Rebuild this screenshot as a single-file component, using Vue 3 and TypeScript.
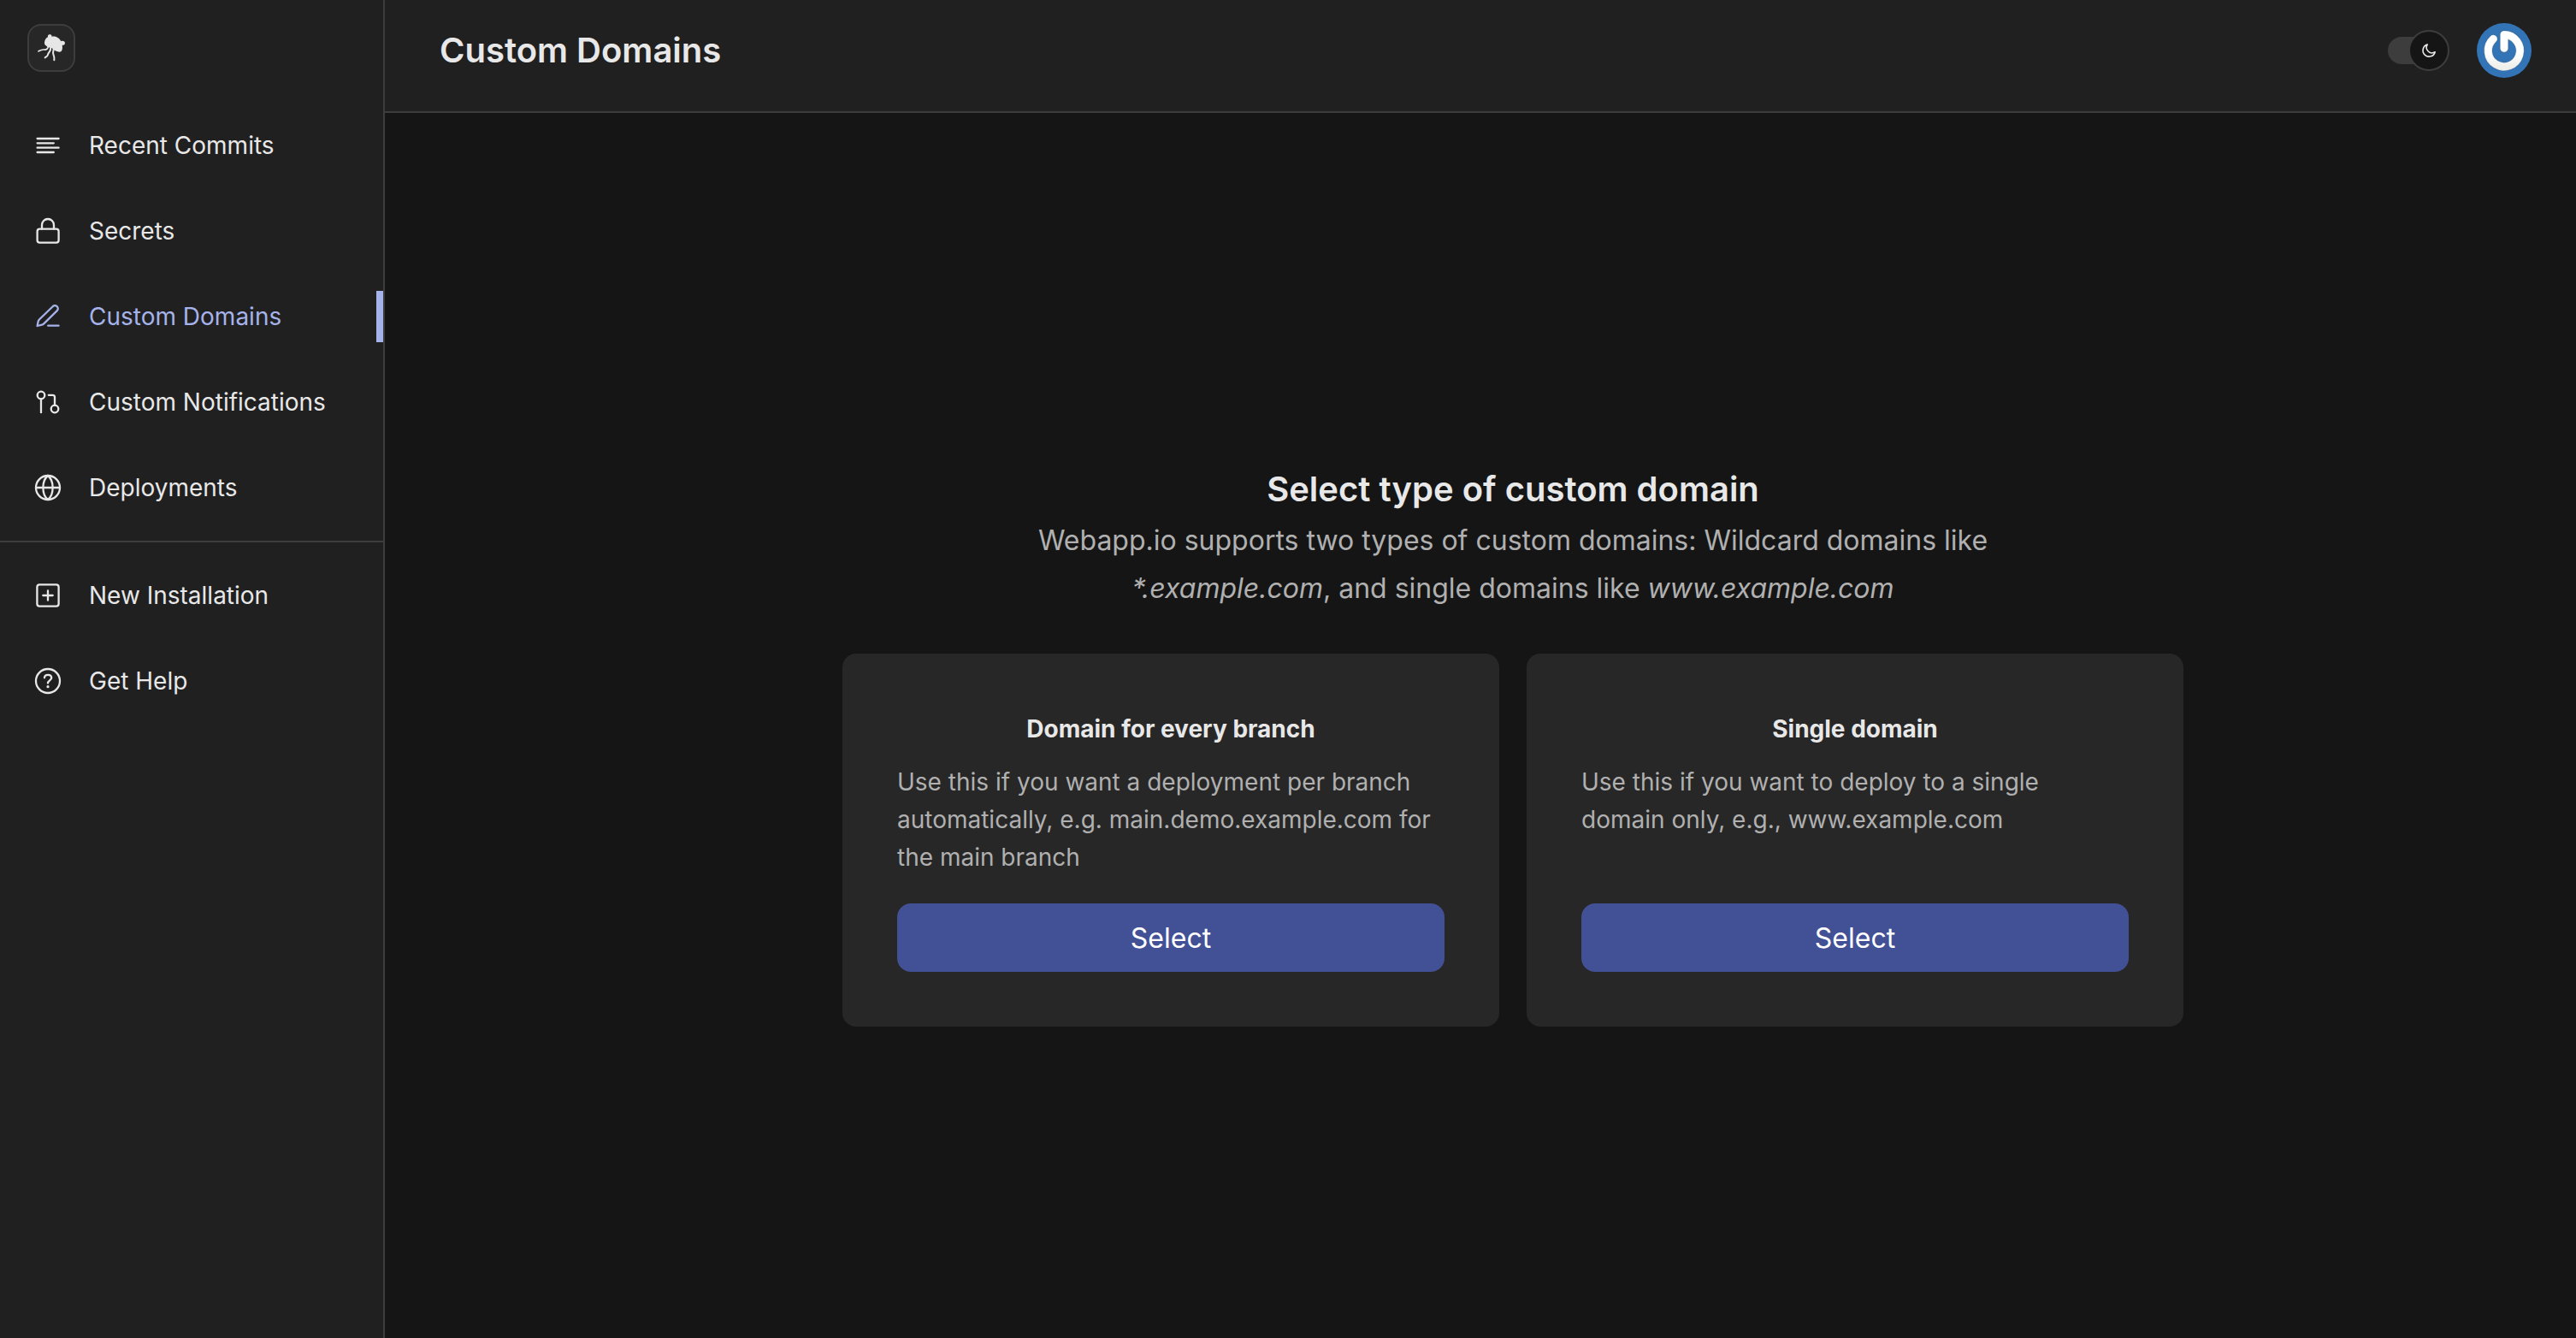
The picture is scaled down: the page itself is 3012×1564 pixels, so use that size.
<script setup lang="ts">
import { ref } from 'vue'

interface NavItem {
  id: string
  label: string
}

interface DomainOption {
  id: string
  title: string
  description: string
}

const projectNav: NavItem[] = [
  { id: 'commits', label: 'Recent Commits' },
  { id: 'secrets', label: 'Secrets' },
  { id: 'domains', label: 'Custom Domains' },
  { id: 'notifications', label: 'Custom Notifications' },
  { id: 'deployments', label: 'Deployments' },
]

const generalNav: NavItem[] = [
  { id: 'install', label: 'New Installation' },
  { id: 'help', label: 'Get Help' },
]

const groups: NavItem[][] = [projectNav, generalNav]

const options: DomainOption[] = [
  {
    id: 'wildcard',
    title: 'Domain for every branch',
    description:
      'Use this if you want a deployment per branch automatically, e.g. main.demo.example.com for the main branch',
  },
  {
    id: 'single',
    title: 'Single domain',
    description: 'Use this if you want to deploy to a single domain only, e.g., www.example.com',
  },
]

const active = ref('domains')
const darkMode = ref(true)
const selected = ref<string | null>(null)
</script>

<template>
  <div class="app">
    <aside class="sidebar">
      <a class="logo" href="#" aria-label="Home">
        <svg viewBox="42 42 156 156" aria-hidden="true">
          <g fill="none" stroke="#e6e6e6" stroke-linecap="round" stroke-width="6">
            <path d="M110 114C108 124 102 127 94 126S82 128 75 132" stroke-width="5" />
            <path d="M118 118C119 132 110 135 108 143S102 151 98 154" />
            <path d="M128 124C124 137 127 144 129 149S130 159 130 163" />
          </g>
          <path
            fill="#e6e6e6"
            d="M108 82C106 75 112 71 117 73C121 74 122 78 121 80C133 78 148 83 154 97C158 94 167 96 168 102C168 109 162 112 158 110C160 118 159 128 154 133C149 136 140 133 134 130C129 129 127 123 121 120C115 117 110 120 106 116C103 112 95 110 96 101C97 93 101 85 108 82Z"
          />
        </svg>
      </a>

      <nav class="nav" aria-label="Main">
        <ul v-for="(group, index) in groups" :key="index" class="nav-group">
          <li v-for="item in group" :key="item.id">
            <a
              href="#"
              class="nav-link"
              :class="{ active: active === item.id }"
              :aria-current="active === item.id ? 'page' : undefined"
              @click.prevent="active = item.id"
            >
              <svg class="nav-icon" viewBox="0 0 32 32" aria-hidden="true">
                <path v-if="item.id === 'commits'" d="M3.6 8h25M3.6 13.3h19.2M3.6 18.7h25M3.6 24h19.2" />
                <template v-else-if="item.id === 'secrets'">
                  <rect x="3.6" y="13.6" width="25" height="16" rx="2.8" />
                  <path d="M9 13.6V9a7 7 0 0 1 14 0v4.6" />
                </template>
                <path
                  v-else-if="item.id === 'domains'"
                  d="M3.6 27L4.7 21.6Q5 20.4 5.9 19.5L21.4 4.5A3.15 3.15 0 0 1 27 8.9L11 24.6Q10.2 25.4 9 25.7ZM16.2 26.7H28.6"
                />
                <template v-else-if="item.id === 'notifications'">
                  <circle cx="8" cy="8" r="4.3" />
                  <circle cx="24" cy="24" r="4.3" />
                  <path d="M8 12.3V28.2M16.8 7.8H21.5A2.5 2.5 0 0 1 24 10.3V19.7" />
                </template>
                <template v-else-if="item.id === 'deployments'">
                  <circle cx="16" cy="16" r="14" />
                  <path d="M2 16H30M16 2C8.5 8 8.5 24 16 30M16 2C23.5 8 23.5 24 16 30" />
                </template>
                <template v-else-if="item.id === 'install'">
                  <rect x="3.4" y="3.4" width="25.2" height="25.2" rx="2.8" />
                  <path d="M16 10.3V21.7M10.3 16H21.7" />
                </template>
                <template v-else>
                  <circle cx="16" cy="16" r="14" />
                  <path d="M12 12.3C12 7.6 20.2 7.6 20.2 12.3C20.2 15.4 16 15.4 16 18.6" />
                  <circle class="dot" cx="16" cy="22.7" r="1.6" />
                </template>
              </svg>
              <span>{{ item.label }}</span>
            </a>
          </li>
        </ul>
      </nav>
    </aside>

    <div class="content">
      <header class="header">
        <h1>Custom Domains</h1>
        <div class="actions">
          <label class="toggle">
            <input v-model="darkMode" type="checkbox" role="switch" aria-label="Dark mode" />
            <span class="knob">
              <svg viewBox="0 0 16 16" aria-hidden="true">
                <path d="M6.2 1A7.2 7.2 0 1 0 15.2 9.7A6.4 6.4 0 0 1 6.2 1Z" />
              </svg>
            </span>
          </label>
          <button class="avatar" type="button" aria-label="Account">
            <svg viewBox="-32 -32 64 64" aria-hidden="true">
              <defs>
                <linearGradient id="ring" x1="0" y1="0" x2="0" y2="1">
                  <stop offset="0.6" stop-color="#ffffff" />
                  <stop offset="1" stop-color="#efefec" />
                </linearGradient>
              </defs>
              <circle r="32" fill="#3274b5" />
              <g fill="none" stroke-linecap="round" stroke-linejoin="round">
                <path d="M0 -2.5V-18.4A18.6 18.6 0 1 1 -12.7 -13.5" stroke="#2b659f" stroke-width="10.5" />
                <path d="M0 -2.5V-18.4A18.6 18.6 0 1 1 -12.7 -13.5" stroke="#d9dcde" stroke-width="9.4" />
                <path d="M0 -3V-18.4A18.6 18.6 0 1 1 -12.7 -13.5" stroke="url(#ring)" stroke-width="8" />
              </g>
            </svg>
          </button>
        </div>
      </header>

      <main class="main">
        <section class="picker">
          <h2>Select type of custom domain</h2>
          <p class="lead">
            Webapp.io supports two types of custom domains: Wildcard domains like
            <em>*.example.com</em>, and single domains like <em>www.example.com</em>
          </p>
          <div class="cards">
            <article v-for="option in options" :key="option.id" class="card">
              <h3>{{ option.title }}</h3>
              <p>{{ option.description }}</p>
              <button type="button" @click="selected = option.id">Select</button>
            </article>
          </div>
        </section>
      </main>
    </div>
  </div>
</template>

<style>
body {
  background: #151515;
}
</style>

<style scoped>
* {
  box-sizing: border-box;
  margin: 0;
  padding: 0;
}

.app {
  display: flex;
  min-height: 100vh;
  background: #151515;
  color: #e8e8e8;
  font-family: Inter, 'Liberation Sans', sans-serif;
  font-size: 28px;
}

.sidebar {
  flex: 0 0 450px;
  padding-top: 28px;
  background: #202020;
  border-right: 2px solid #3d3d3d;
}

.logo {
  display: block;
  width: 56px;
  height: 56px;
  margin-left: 32px;
  background: #272727;
  border: 2px solid #3d3d3d;
  border-radius: 16px;
}

.logo svg {
  display: block;
}

.nav {
  margin-top: 36px;
}

.nav-group {
  list-style: none;
}

.nav-group + .nav-group {
  margin-top: 12px;
  padding-top: 12px;
  border-top: 2px solid #3d3d3d;
}

.nav-link {
  display: flex;
  align-items: center;
  gap: 32px;
  height: 100px;
  padding-left: 40px;
  color: #e8e8e8;
  text-decoration: none;
}

.nav-link.active {
  color: #a5b3ea;
}

.nav-link.active::after {
  content: '';
  width: 8px;
  height: 60px;
  margin-left: auto;
  background: #a5b3ea;
}

.nav-icon {
  width: 32px;
  height: 32px;
  fill: none;
  stroke: currentColor;
  stroke-width: 2.3;
  stroke-linecap: round;
  stroke-linejoin: round;
}

.nav-icon .dot {
  fill: currentColor;
  stroke: none;
}

.content {
  display: flex;
  flex: 1;
  flex-direction: column;
  min-width: 0;
}

.header {
  display: flex;
  align-items: center;
  justify-content: space-between;
  padding: 27px 52px 39px 64px;
  background: #202020;
  border-bottom: 2px solid #3d3d3d;
}

h1,
h2 {
  font-size: 40px;
  font-weight: 600;
  line-height: 48px;
}

.actions {
  display: flex;
  align-items: center;
  gap: 32px;
}

.toggle {
  display: grid;
  align-items: center;
  width: 72px;
  cursor: pointer;
}

.toggle input {
  grid-area: 1 / 1;
  width: 56px;
  height: 32px;
  background: #3d3d3d;
  border-radius: 16px;
  appearance: none;
}

.knob {
  display: grid;
  grid-area: 1 / 1;
  place-items: center;
  width: 48px;
  height: 48px;
  background: #151515;
  border: 2px solid #3d3d3d;
  border-radius: 50%;
}

.toggle input:checked + .knob {
  justify-self: end;
}

.knob svg {
  width: 16px;
  height: 16px;
  overflow: visible;
  fill: none;
  stroke: #e8e8e8;
  stroke-width: 1.6;
  stroke-linejoin: round;
}

.avatar {
  width: 64px;
  height: 64px;
  background: none;
  border: 0;
  border-radius: 50%;
  cursor: pointer;
}

.avatar svg {
  display: block;
}

.main {
  display: flex;
  flex: 1;
  align-items: center;
  justify-content: center;
  padding: 52px 0 0 76px;
}

.picker {
  width: 100%;
  max-width: 1568px;
  text-align: center;
}

.lead {
  max-width: 1200px;
  margin: 8px auto 48px;
  color: #b0b0b0;
  font-size: 32px;
  line-height: 56px;
}

.cards {
  display: flex;
  gap: 32px;
}

.card {
  display: flex;
  flex: 1;
  flex-direction: column;
  padding: 64px;
  background: #272727;
  border-radius: 16px;
}

.card h3 {
  font-size: 28px;
  font-weight: 700;
  line-height: 48px;
}

.card p {
  flex: 1;
  margin: 16px 0 32px;
  color: #b0b0b0;
  line-height: 44px;
  text-align: left;
}

.card button {
  height: 80px;
  color: #ffffff;
  background: #425196;
  border: 0;
  border-radius: 16px;
  font-family: inherit;
  font-size: 32px;
  cursor: pointer;
}
</style>
